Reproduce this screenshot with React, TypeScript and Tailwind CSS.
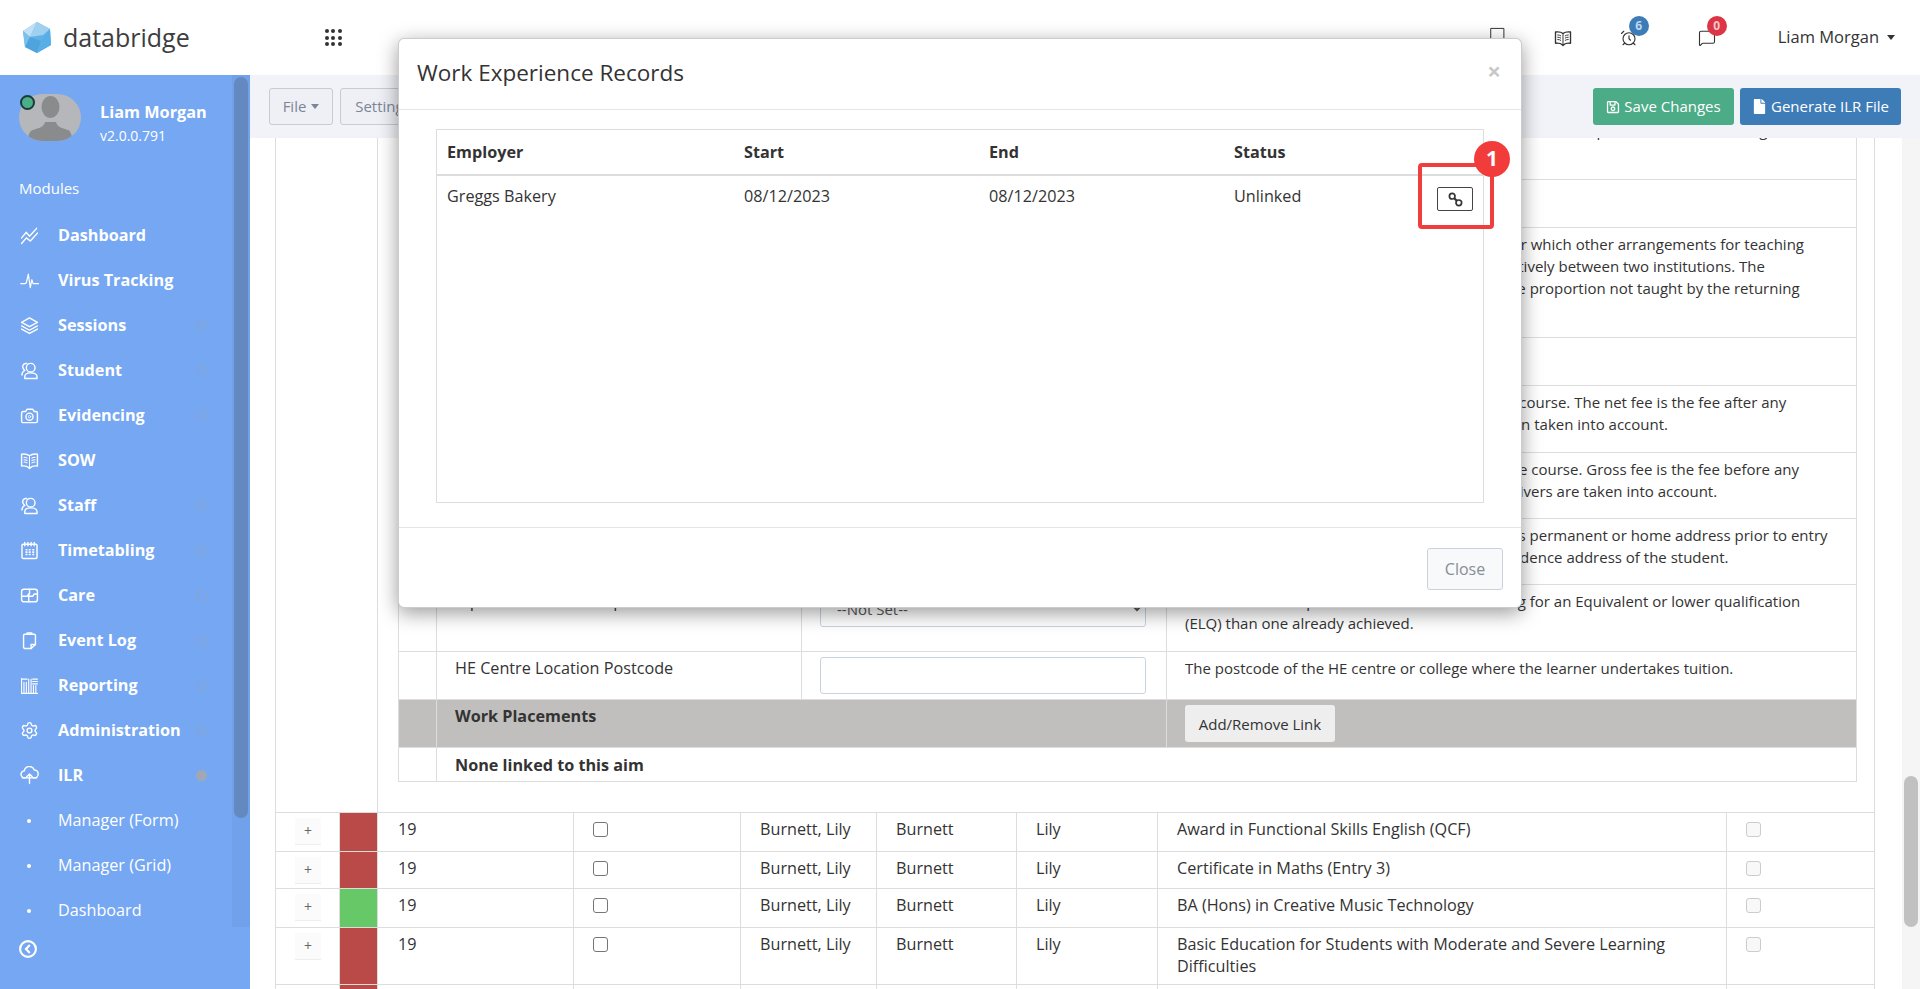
import React from 'react';
import { Settings, AlarmClock, MessageSquare } from 'lucide-react';
import { FaRegSave, FaFile } from 'react-icons/fa';

const Ic = ({ children, size = 19, sw = 1.8 }: { children: React.ReactNode; size?: number; sw?: number }) => (
    <svg width={size} height={size} viewBox="0 0 24 24" fill="none" stroke="currentColor" strokeWidth={sw} strokeLinecap="round" strokeLinejoin="round">
        {children}
    </svg>
);

const BookIcon = ({ size = 19 }: { size?: number }) => (
    <Ic size={size}>
        <path d="M12 6C9.500 4 6 3.500 2 4v15c4-.5 7 0 9 2l1 1 1-1c2-2 5-2.500 9-2V4c-4-.5-7.500 0-10 2z" />
        <path d="M12 6v15M5 8c1.500 0 3 .3 4 1M5 11c1.500 0 3 .3 4 1M5 14c1.500 0 3 .3 4 1M19 8c-1.500 0-3 .3-4 1M19 11c-1.500 0-3 .3-4 1M19 14c-1.500 0-3 .3-4 1" strokeWidth={1.3} />
    </Ic>
);

const PeopleIcon = () => (
    <Ic>
        <circle cx="13.500" cy="8.500" r="5.500" />
        <path d="M6 22v-2c0-3 3-5 7.500-5s8 2 8 5v2z" />
        <path d="M8.500 3.200C5.500 2.500 3 5 3.500 8c.3 2 1.500 3 2.500 3.700-2 1-3.500 3-3.500 6" />
    </Ic>
);

const menu: { label: string; icon: React.ReactNode; dot?: boolean }[] = [
    { label: 'Dashboard', icon: <Ic><path d="M2 15l6-7 4 5 9-10" /><path d="M2 22l6-7 5 4 9-10" /></Ic> },
    { label: 'Virus Tracking', icon: <Ic sw={1.500}><path d="M1 16h5l2-1 2.500-11 2.500 17 2-10 1.500 5h7" /></Ic> },
    { label: 'Sessions', dot: true, icon: <Ic><path d="M12 2.500 2 8l10 5.500L22 8z" /><path d="M2 12.500 12 18l10-5.500" /><path d="M2 16.500 12 22l10-5.500" /></Ic> },
    { label: 'Student', dot: true, icon: <PeopleIcon /> },
    { label: 'Evidencing', dot: true, icon: <Ic><path d="M2 9a2 2 0 0 1 2-2h3l2-3h7l2 3h2a2 2 0 0 1 2 2v10a2 2 0 0 1-2 2H4a2 2 0 0 1-2-2z" /><circle cx="12" cy="13.500" r="4.500" /><circle cx="12" cy="13.500" r="1.500" strokeWidth={1} /></Ic> },
    { label: 'SOW', icon: <BookIcon /> },
    { label: 'Staff', dot: true, icon: <PeopleIcon /> },
    { label: 'Timetabling', dot: true, icon: <Ic><rect x="2.500" y="4" width="19" height="18" rx="1.500" /><path d="M6 2v4M10 2v4M14 2v4M18 2v4" /><path d="M7 11h2.500M11 11h2.500M15.500 11H18M7 14h2.500M11 14h2.500M15.500 14H18M7 17h2.500M11 17h2.500M15.500 17H18" strokeWidth={2} strokeLinecap="butt" /></Ic> },
    { label: 'Care', dot: true, icon: <Ic><rect x="2" y="4" width="20" height="16" rx="3" /><path d="M2 13h7l2-3v10M11 13h5l2-3h4M12 4v6" /></Ic> },
    { label: 'Event Log', dot: true, icon: <Ic><path d="M14 22H6a1.500 1.500 0 0 1-1.500-1.500v-15A1.500 1.500 0 0 1 6 4h12a1.500 1.500 0 0 1 1.500 1.500V17z" /><path d="M14 22v-5h5.500" /><path d="M9 4V2.500h6V4" /></Ic> },
    { label: 'Reporting', dot: true, icon: <Ic sw={1.400}><path d="M2 22V3M2 22h20M5 22V8M8 22V8M11 22V4M14 22V4M17 22V12M20 22V12M2 4h7M16 4h6M16 7h6M16 10h6" /></Ic> },
    { label: 'Administration', dot: true, icon: <Settings size={19} strokeWidth={1.800} /> },
];

const subMenu = ['Manager (Form)', 'Manager (Grid)', 'Dashboard'];

const Sidebar = () => (
    <aside className="relative flex w-[250px] shrink-0 flex-col overflow-hidden bg-[#76a7f2] text-white">
        <div className="flex h-[100px] pl-[19px] pt-[19px]">
            <div className="relative h-[47px] w-[62px] overflow-hidden rounded-[24px] bg-[#b5b7ba]">
                <svg width="62" height="47" viewBox="0 0 62 47" fill="#8a8b8d">
                    <ellipse cx="31.500" cy="13" rx="9" ry="11" />
                    <path d="M9 47c0-4 1-10 5-11 6-2 11-3 12-8h11c1 5 6 6 12 8 3 1 4 7 5 11z" />
                </svg>
            </div>
            <div className="pl-[19px]">
                <div className="mt-[7px] whitespace-nowrap text-[16.300px] leading-[22px] font-bold">Liam Morgan</div>
                <div className="mt-[2px] text-[14px] leading-[22px]">v2.0.0.791</div>
            </div>
        </div>
        <span className="absolute left-[20px] top-[20px] h-[15px] w-[15px] rounded-full border-2 border-[#1d3a3a] bg-[#4aae86]" />
        <div className="pl-[19px] pt-[3px] pb-[15px] text-[15px] leading-[20px]">Modules</div>
        <nav className="h-[714px] overflow-hidden">
            {menu.map((m) => (
                <div key={m.label} className="flex h-[45px] items-center pl-[20px]">
                    <span className="flex w-[38px] shrink-0">{m.icon}</span>
                    <span className="text-[16.200px] font-bold">{m.label}</span>
                    {m.dot && <span className="absolute left-[196px] h-[11px] w-[11px] rounded-full border border-[#8fa3c4]" />}
                </div>
            ))}
            <div className="flex h-[45px] items-center pl-[20px]">
                <span className="flex w-[38px] shrink-0">
                    <Ic><path d="M7 15H6a4.500 4.500 0 0 1-.5-9 6.500 6.500 0 0 1 12.500-1 5 5 0 0 1 0 10h-1" /><path d="M12 22V10M8.500 13.500 12 10l3.500 3.500" /><path d="M3 15h18" /></Ic>
                </span>
                <span className="text-[16.200px] font-bold">ILR</span>
                <span className="absolute left-[196px] h-[11px] w-[11px] rounded-full bg-[#a0a8b5]" />
            </div>
            {subMenu.map((s) => (
                <div key={s} className="flex h-[45px] items-center pl-[27px]">
                    <span className="mr-[27px] h-[4px] w-[4px] rounded-full bg-white" />
                    <span className="text-[16.200px]">{s}</span>
                </div>
            ))}
        </nav>
        <div className="pl-[19px] pt-[13px]">
            <svg width="18" height="18" viewBox="0 0 18 18" fill="none" stroke="white" strokeWidth="2.200">
                <circle cx="9" cy="9" r="7.900" />
                <path d="M10.800 5 7 9l3.800 4" />
            </svg>
        </div>
        {/* sidebar scrollbar */}
        <div className="absolute right-0 top-0 h-[852px] w-[18px] bg-[#72a1ec]">
            <div className="ml-[2px] mt-[2px] h-[741px] w-[14px] rounded-[7px] bg-[#6389c0]" />
        </div>
    </aside>
);

const Header = () => (
    <header className="flex h-[75px] shrink-0 items-center bg-white text-[#333]">
        <svg className="ml-[23px]" width="28" height="31" viewBox="0 0 28 31">
            <polygon points="14,0 27,7 28,23 14,31 2,25 0,9" fill="#5eb2e8" />
            <polygon points="14,0 0,9 7,15" fill="#c2e0f5" />
            <polygon points="14,0 27,7 20,13 7,15" fill="#9fd0f0" />
            <polygon points="0,9 7,15 2,25" fill="#7cc0ec" />
            <polygon points="7,15 2,25 14,31 18,19" fill="#4fa4dd" />
            <polygon points="27,7 28,23 14,31 18,19" fill="#58aee6" />
        </svg>
        <span className="ml-[12px] text-[25px] leading-none text-[#3d3d3d]">databridge</span>
        <div className="ml-[135px] grid grid-cols-3 gap-[2.500px]">
            {[0, 1, 2, 3, 4, 5, 6, 7, 8].map((d) => <span key={d} className="h-[4px] w-[4px] rounded-full bg-[#333]" />)}
        </div>
        <div className="ml-auto flex items-center text-[#333]">
            <div className="mr-[48px] mt-[-4px]"><Ic size={17} sw={1.400}><rect x="3" y="2" width="18" height="20" /></Ic></div>
            <div className="mr-[48px]"><BookIcon size={18} /></div>
            <div className="relative mr-[60px]">
                <AlarmClock size={18} strokeWidth={1.500} />
                <span className="absolute left-[9px] top-[-13px] flex h-[20px] w-[20px] items-center justify-center rounded-full bg-[#3e7cb8] text-[12px] font-bold text-[#bcd8f0]">6</span>
            </div>
            <div className="relative mr-[62px]">
                <MessageSquare size={18} strokeWidth={1.500} />
                <span className="absolute left-[9px] top-[-13px] flex h-[20px] w-[20px] items-center justify-center rounded-full bg-[#dc3545] text-[12px] font-bold text-[#f5c6cb]">0</span>
            </div>
            <span className="text-[16.500px]">Liam Morgan</span>
            <span className="ml-[8px] mr-[25px] h-0 w-0 border-x-[4.500px] border-t-[5px] border-x-transparent border-t-[#333]" />
        </div>
    </header>
);

const Toolbar = () => (
    <div className="flex h-[63px] shrink-0 items-center bg-[#f1f3f8] pl-[19px] pr-[19px]">
        <button className="flex h-[37px] w-[64px] items-center justify-center rounded-[3px] border border-[#c4ccd8] bg-[#eef0f5] text-[15px] text-[#7c8595]">
            File<span className="ml-[5px] h-0 w-0 border-x-[4.500px] border-t-[5px] border-x-transparent border-t-[#7c8595]" />
        </button>
        <button className="ml-[7px] flex h-[37px] w-[86px] items-center justify-center rounded-[3px] border border-[#c4ccd8] bg-[#eef0f5] text-[15px] text-[#7c8595]">
            Settings
        </button>
        <button className="ml-auto flex h-[37px] w-[141px] items-center justify-center gap-[4px] whitespace-nowrap rounded-[3px] bg-[#4cac87] text-[15px] text-white">
            <FaRegSave size={14} />Save Changes
        </button>
        <button className="ml-[6px] flex h-[37px] w-[161px] items-center justify-center gap-[4px] whitespace-nowrap rounded-[3px] bg-[#3e7cb8] text-[15px] text-white">
            <FaFile size={15} />Generate ILR File
        </button>
    </div>
);

const detailRows: { h: string; label: string; field?: React.ReactNode; text: React.ReactNode }[] = [
    { h: 'h-[79px]', label: 'Returning Student', text: <div className="pt-[13px]">This field records the planned end of study and will be completed and the aim is a good fit<br />agreed dates.</div> },
    { h: 'h-[48px]', label: 'Course Type', text: '' },
    {
        h: 'h-[110px]', label: 'Franchise Arrangements',
        text: <>Indicates programme of study at the provider for which other arrangements for teaching<br />have been made, or which was taught collaboratively between two institutions. The<br />percentage value entered in the field records the proportion not taught by the returning<br />provider.</>,
    },
    { h: 'h-[48px]', label: 'Fee Band', text: '' },
    { h: 'h-[67px]', label: 'Net Fee', text: <>The net tuition fee charged to a student for this course. The net fee is the fee after any<br />waivers, bursaries and discounts given have been taken into account.</> },
    { h: 'h-[66px]', label: 'Gross Fee', text: <>The gross tuition fee charged to a student for the course. Gross fee is the fee before any<br />financial support, bursaries, discounts or fee waivers are taken into account.</> },
    { h: 'h-[66px]', label: 'Home Postcode', text: <>The postcode of the learner's usual home, that is permanent or home address prior to entry<br />to the course. It is not necessarily the correspondence address of the student.</> },
    {
        h: 'h-[67px]', label: 'Equivalent Aim Exemption',
        field: <select className="h-[37px] w-[326px] rounded-[3px] border border-[#c9d2e0] bg-white px-[12px] text-[15px] text-[#555]"><option>--Not Set--</option></select>,
        text: <>Indicates when a person is a student is attending for an Equivalent or lower qualification<br />(ELQ) than one already achieved.</>,
    },
    {
        h: 'h-[48px]', label: 'HE Centre Location Postcode',
        field: <input className="block h-[37px] w-[326px] rounded-[3px] border border-[#c9d2e0] bg-white" />,
        text: 'The postcode of the HE centre or college where the learner undertakes tuition.',
    },
];

const DetailTable = () => (
    <table className="w-[1459px] table-fixed border-collapse text-[16.200px] leading-[22px] text-[#333]">
        <colgroup>
            <col className="w-[38px]" />
            <col className="w-[365px]" />
            <col className="w-[365px]" />
            <col />
        </colgroup>
        <tbody>
            {detailRows.map((r) => (
                <tr key={r.label} className={r.h}>
                    <td className="border border-[#ddd]" />
                    <td className="border border-[#ddd] pl-[18px] pt-[5px] align-top">{r.label}</td>
                    <td className="border border-[#ddd] pl-[18px] pt-[5px] align-top">{r.field}</td>
                    <td className="whitespace-nowrap border border-[#ddd] pl-[18px] pt-[5px] align-top text-[15px] leading-[22px]">{r.text}</td>
                </tr>
            ))}
            <tr className="h-[48px] bg-[#c0bfbd]">
                <td className="border border-[#ddd]" />
                <td colSpan={2} className="border border-[#ddd] pl-[18px] pt-[5px] align-top font-bold">Work Placements</td>
                <td className="border border-[#ddd] pl-[18px] align-middle">
                    <button className="h-[37px] w-[150px] rounded-[3px] bg-[#eee] text-[15px] text-[#333]">Add/Remove Link</button>
                </td>
            </tr>
            <tr className="h-[34px]">
                <td className="border border-[#ddd]" />
                <td colSpan={3} className="border border-[#ddd] pl-[18px] font-bold">None linked to this aim</td>
            </tr>
        </tbody>
    </table>
);

const aims = [
    { title: 'Award in Functional Skills English (QCF)', color: 'bg-[#b94a48]', h: 'h-[39px]' },
    { title: 'Certificate in Maths (Entry 3)', color: 'bg-[#b94a48]', h: 'h-[37px]' },
    { title: 'BA (Hons) in Creative Music Technology', color: 'bg-[#66c867]', h: 'h-[39px]' },
    { title: 'Basic Education for Students with Moderate and Severe Learning Difficulties', color: 'bg-[#b94a48]', h: 'h-[57px]' },
    { title: 'Award in Employability Skills', color: 'bg-[#b94a48]', h: 'h-[39px]' },
];

const AimsTable = () => (
    <table className="-mt-[39px] ml-[25px] w-[1600px] table-fixed border-collapse text-[16.200px] leading-[22px] text-[#333]">
        <colgroup>
            <col className="w-[64px]" />
            <col className="w-[38px]" />
            <col className="w-[196px]" />
            <col className="w-[167px]" />
            <col className="w-[136px]" />
            <col className="w-[140px]" />
            <col className="w-[141px]" />
            <col className="w-[569px]" />
            <col />
        </colgroup>
        <tbody>
            <tr>
                <td colSpan={2} className="border border-[#ddd]" />
                <td colSpan={7} className="h-[713px] border border-[#ddd] px-[20px] align-top">
                    <DetailTable />
                </td>
            </tr>
            {aims.map((a) => (
                <tr key={a.title} className={a.h}>
                    <td className="border border-[#ddd] pl-[19px] pt-[5px] align-top">
                        <button className="flex h-[26px] w-[26px] items-center justify-center bg-[#fbfbfb] text-[14px] text-[#666] shadow-[0_1px_0_#eee]">+</button>
                    </td>
                    <td className={`border border-[#ddd] ${a.color}`} />
                    <td className="border border-[#ddd] pl-[20px] pt-[5px] align-top">19</td>
                    <td className="border border-[#ddd] pl-[19px] pt-[9px] align-top">
                        <input type="checkbox" className="block h-[15px] w-[15px] appearance-none rounded-[3px] border border-[#767676] bg-white" />
                    </td>
                    <td className="border border-[#ddd] pl-[19px] pt-[5px] align-top">Burnett, Lily</td>
                    <td className="border border-[#ddd] pl-[19px] pt-[5px] align-top">Burnett</td>
                    <td className="border border-[#ddd] pl-[19px] pt-[5px] align-top">Lily</td>
                    <td className="border border-[#ddd] pl-[19px] pt-[5px] align-top">{a.title}</td>
                    <td className="border border-[#ddd] pl-[19px] pt-[9px] align-top">
                        <input type="checkbox" disabled className="block h-[15px] w-[15px] appearance-none rounded-[3px] border border-[#ccc] bg-[#f8f8f8]" />
                    </td>
                </tr>
            ))}
        </tbody>
    </table>
);

const WorkExperienceModal = () => (
    <div className="absolute left-[398px] top-[38px] flex h-[570px] w-[1124px] flex-col rounded-[6px] border border-[#0003] bg-white text-[#333] shadow-[0_5px_20px_rgba(0,0,0,0.4)]">
        <div className="flex h-[71px] shrink-0 items-center justify-between border-b border-[#e5e5e5] pb-[3px] pl-[18px] pr-[20px]">
            <h4 className="text-[22.500px] font-normal">Work Experience Records</h4>
            <span className="mb-[4px] text-[24px] font-bold leading-none text-[#c8c8c8]">×</span>
        </div>
        <div className="flex-1 px-[37px] pt-[19px]">
            <div className="h-[374px] border border-[#ddd]">
                <table className="w-full table-fixed border-collapse text-[16.200px] leading-[22px]">
                    <colgroup>
                        <col className="w-[297px]" />
                        <col className="w-[245px]" />
                        <col className="w-[245px]" />
                        <col />
                    </colgroup>
                    <thead>
                        <tr className="h-[45px] border-b-2 border-[#ddd] text-left">
                            <th className="px-[10px] font-bold">Employer</th>
                            <th className="px-[10px] font-bold">Start</th>
                            <th className="px-[10px] font-bold">End</th>
                            <th className="px-[10px] font-bold">Status</th>
                        </tr>
                    </thead>
                    <tbody>
                        <tr>
                            <td className="px-[10px] pt-[9px] align-top">Greggs Bakery</td>
                            <td className="px-[10px] pt-[9px] align-top">08/12/2023</td>
                            <td className="px-[10px] pt-[9px] align-top">08/12/2023</td>
                            <td className="px-[10px] pt-[9px] align-top">
                                <div className="flex items-start justify-between">
                                    Unlinked
                                    <button className="mt-[2px] flex h-[24px] w-[36px] items-center justify-center rounded-[2px] border border-[#444]">
                                        <svg width="15" height="15" viewBox="0 0 15 15" fill="none" stroke="#333" strokeWidth="1.700">
                                            <ellipse cx="4.200" cy="4.200" rx="2.800" ry="2.800" />
                                            <ellipse cx="10.800" cy="10.800" rx="2.800" ry="2.800" />
                                            <path d="M6.200 6.200 8.800 8.800" strokeWidth="2.200" />
                                        </svg>
                                    </button>
                                </div>
                            </td>
                        </tr>
                    </tbody>
                </table>
            </div>
        </div>
        <div className="flex h-[80px] shrink-0 items-start justify-end border-t border-[#e5e5e5] pr-[18px] pt-[20px]">
            <button className="h-[42px] w-[76px] rounded-[3px] border border-[#c9d2dc] bg-[#f8f9fa] text-[16px] text-[#868e96]">Close</button>
        </div>
        {/* annotation over the link button */}
        <div className="absolute left-[1019px] top-[124px] h-[66px] w-[76px] rounded-[4px] border-[4px] border-[#ef3e3e]" />
        <div className="absolute left-[1075px] top-[102px] flex h-[36px] w-[36px] items-center justify-center rounded-full bg-[#f23c3c] text-[21px] font-bold text-white">1</div>
    </div>
);

const App = () => (
    <div className="relative flex h-[989px] w-[1920px] flex-col overflow-hidden bg-white font-['Open_Sans',sans-serif]">
        <Header />
        <div className="flex min-h-0 flex-1">
            <Sidebar />
            <main className="flex min-w-0 flex-1 flex-col">
                <Toolbar />
                <div className="flex min-h-0 flex-1">
                    <div className="relative z-0 min-w-0 flex-1 overflow-hidden">
                        <AimsTable />
                    </div>
                    <div className="w-[18px] shrink-0 bg-[#f5f5f6] pt-[638px] pl-[2px]">
                        <div className="h-[151px] w-[14px] rounded-[7px] bg-[#c1c1c1]" />
                    </div>
                </div>
            </main>
        </div>
        <WorkExperienceModal />
    </div>
);

export default App;
